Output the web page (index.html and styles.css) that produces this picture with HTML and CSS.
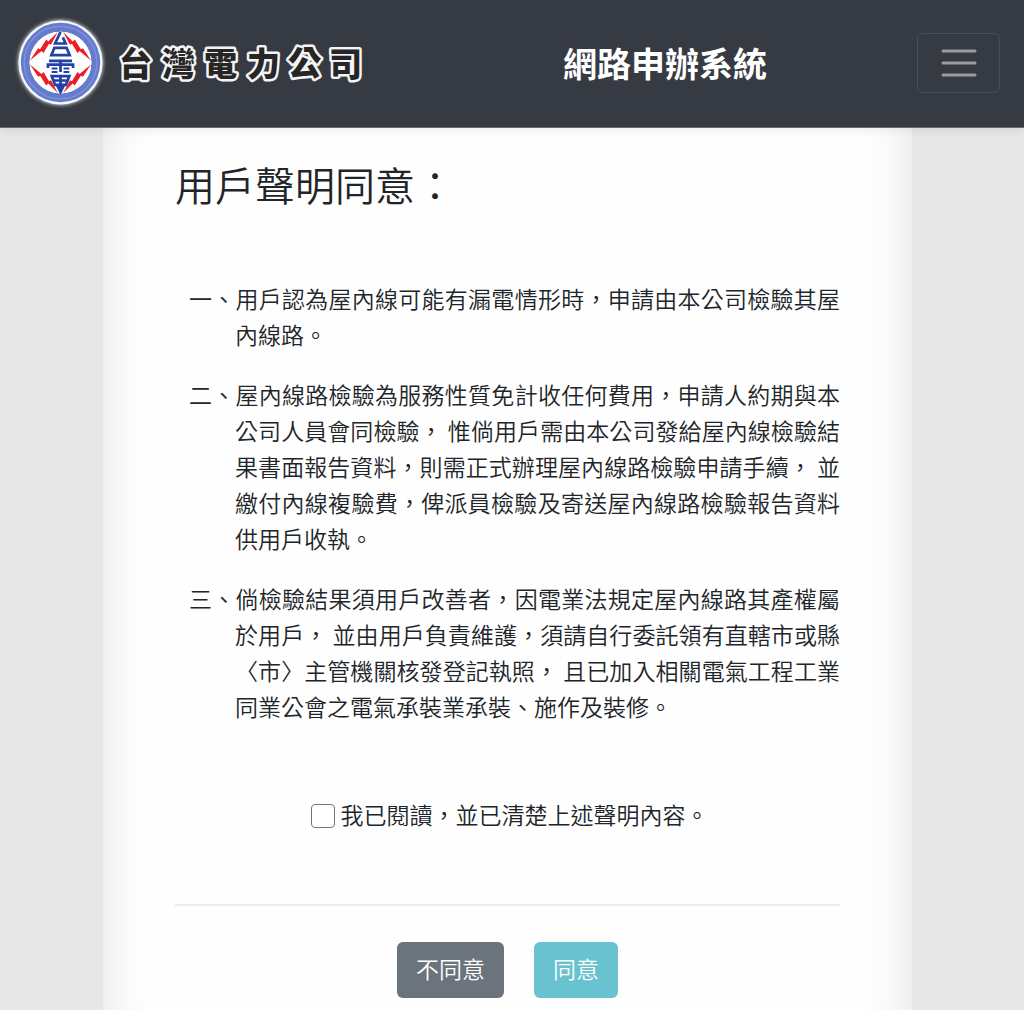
FILE: index.html
```html
<!DOCTYPE html>
<html lang="zh-Hant">
<head>
    <meta charset="UTF-8">
    <meta name="viewport" content="width=device-width, initial-scale=1.0">
    <title>網路申辦系統</title>
    <link rel="stylesheet" href="styles.css">
</head>
<body>
    <header class="navbar">
        <a class="brand" href="#">
            <svg class="brand-mark" viewBox="0 0 280 280" aria-hidden="true">
                <circle cx="140" cy="140" r="124" fill="#f4f6fd"/>
                <circle cx="140" cy="140" r="104" fill="none" stroke="#657bcb" stroke-width="26"/>
                <circle cx="140" cy="140" r="107" fill="none" stroke="#8091d6" stroke-width="4"/>
                <circle cx="140" cy="140" r="91" fill="#fff"/>
                <!-- lightning -->
                <g fill="#ee1c25">
                    <path d="M132 50 L112 88 L106 85 L90 112 L84 106 L50 134 L74 98 L80 101 L98 72 L104 78 Z"/>
                    <path d="M148 50 L168 88 L174 85 L190 112 L196 106 L230 134 L206 98 L200 101 L182 72 L176 78 Z"/>
                    <path d="M132 230 L112 192 L106 195 L90 168 L84 174 L50 146 L74 182 L80 179 L98 208 L104 202 Z"/>
                    <path d="M148 230 L168 192 L174 195 L190 168 L196 174 L230 146 L206 182 L200 179 L182 208 L176 202 Z"/>
                </g>
                <!-- centre diamond -->
                <g fill="none" stroke="#2340a6" stroke-width="8">
                    <path d="M140 50 L124 84 H155 L147 66"/>
                    <path d="M122 97 H158 L167 118 H113 Z"/>
                    <path d="M106 135 H174 M103 156 V146 H177 V156 M140 135 V168"/>
                    <path d="M114 158 H131 M149 158 H166 M114 168 H131 M149 168 H166" stroke-width="6"/>
                    <path d="M114 180 H166 L156 206 H124 Z M118 193 H162 M140 180 V226"/>
                </g>
                <path d="M126 208 H154 L140 236 Z" fill="#2340a6"/>
            </svg>
            <svg class="brand-name" viewBox="0 0 256 56" role="img" aria-label="台灣電力公司">
                <text y="41 41 41 41 40 41" x="7 50 92 135 176 217">台灣電力公司</text>
            </svg>
        </a>
        <h1 class="site-title">網路申辦系統</h1>
        <button class="menu-toggle" type="button" aria-label="選單">
            <svg viewBox="0 0 36 36" aria-hidden="true">
                <path d="M2 6 H34 M2 18 H34 M2 30 H34"/>
            </svg>
        </button>
    </header>

    <main class="panel">
        <h2 class="panel-title">用戶聲明同意：</h2>

        <div class="terms">
            <p>一、用戶認為屋內線可能有漏電情形時，申請由本公司檢驗其屋內線路。</p>
            <p>二、屋內線路檢驗為服務性質免計收任何費用，申請人約期與本公司人員會同檢驗， 惟倘用戶需由本公司發給屋內線檢驗結果書面報告資料，則需正式辦理屋內線路檢驗申請手續， 並繳付內線複驗費，俾派員檢驗及寄送屋內線路檢驗報告資料供用戶收執。</p>
            <p>三、倘檢驗結果須用戶改善者，因電業法規定屋內線路其產權屬於用戶， 並由用戶負責維護，須請自行委託領有直轄市或縣〈市〉主管機關核發登記執照， 且已加入相關電氣工程工業同業公會之電氣承裝業承裝、施作及裝修。</p>
        </div>

        <div class="confirm">
            <input type="checkbox" id="agreeCheck">
            <label for="agreeCheck">我已閱讀，並已清楚上述聲明內容。</label>
        </div>

        <hr>

        <div class="actions">
            <button class="btn btn-secondary" type="button">不同意</button>
            <button class="btn btn-info" type="button">同意</button>
        </div>
    </main>
</body>
</html>
```
FILE: styles.css
```css
* {
    box-sizing: border-box;
}

body {
    margin: 0;
    min-height: 100vh;
    display: flex;
    flex-direction: column;
    font-family: "Noto Sans CJK TC", sans-serif;
    font-size: 23px;
    font-weight: 350;
    line-height: 36px;
    color: #212529;
    background-color: #e7e7e7;
}

.navbar {
    position: relative;
    display: flex;
    align-items: center;
    justify-content: space-between;
    padding: 15px 24px 17px 13px;
    background-color: #363a42;
    border-bottom: 1px solid #66696e;
    box-shadow: 0 2px 10px rgba(0, 0, 0, 0.08);
}

.brand {
    display: flex;
    align-items: center;
    gap: 4px;
}

.brand-mark {
    width: 95px;
    height: 95px;
    filter: drop-shadow(0 0 2px #fff);
}

.brand-name {
    width: 256px;
    height: 56px;
}

.brand-name text {
    font-size: 33px;
    font-weight: 900;
    fill: #262626;
    stroke: #f4f4f4;
    stroke-width: 5px;
    stroke-linejoin: round;
    paint-order: stroke;
}

.site-title {
    margin: 0 0 0 45px;
    font-size: 34px;
    font-weight: 700;
    line-height: 48px;
    color: #fff;
}

.menu-toggle {
    width: 83px;
    height: 60px;
    padding: 0;
    display: flex;
    align-items: center;
    justify-content: center;
    background: transparent;
    border: 1px solid #494d55;
    border-radius: 6px;
    cursor: pointer;
}

.menu-toggle svg {
    width: 36px;
    height: 36px;
    fill: none;
    stroke: #999ca1;
    stroke-width: 3px;
    stroke-linecap: round;
}

.panel {
    flex: 1;
    margin: 0 112px 0 103px;
    padding: 32px 72px 12px;
    background-color: #fefefe;
    box-shadow:
        inset 48px 0 48px -48px rgba(0, 0, 0, 0.12),
        inset -48px 0 48px -48px rgba(0, 0, 0, 0.12);
}

.panel-title {
    margin: 0 0 72px;
    font-size: 40px;
    font-weight: 350;
    line-height: 48px;
}

.terms {
    padding-left: 60px;
    text-align: justify;
    text-spacing-trim: space-all;
}

.terms p {
    margin: 0 0 24px;
    text-indent: -46px;
}

.confirm {
    display: flex;
    align-items: center;
    justify-content: center;
    gap: 6px;
    margin: 72px 0;
    padding-left: 4px;
}

.confirm input {
    width: 24px;
    height: 24px;
    margin: 4px 0 0;
    appearance: none;
    background-color: #fff;
    border: 1px solid #767676;
    border-radius: 4px;
}

.confirm input:checked {
    background-color: #69c2d0;
}

hr {
    margin: 0 0 36px;
    border: 0;
    border-top: 2px solid #ececec;
}

.actions {
    display: flex;
    justify-content: center;
    gap: 30px;
}

.btn {
    padding: 8px 19px 12px;
    font-family: inherit;
    font-size: 23px;
    font-weight: 350;
    line-height: 36px;
    color: #fff;
    border: 0;
    border-radius: 6px;
    cursor: pointer;
}

.btn-secondary {
    background-color: #6b747c;
}

.btn-info {
    background-color: #69c2d0;
}
```
